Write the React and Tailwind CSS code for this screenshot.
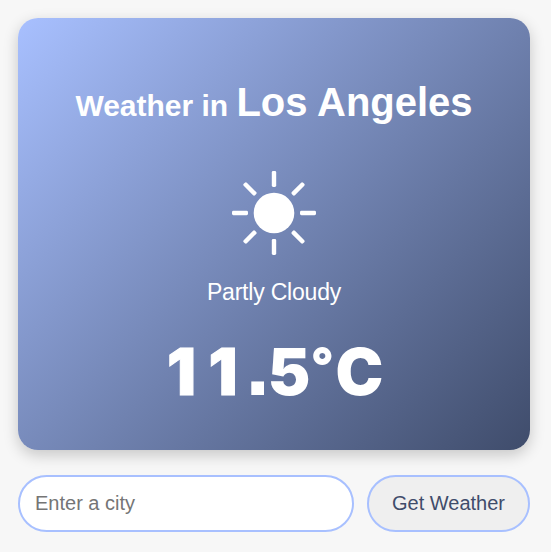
const rays = [0, 45, 90, 135, 180, 225, 270, 315];

function Sun() {
  return (
    <svg className="mt-[34px] block size-[100px]" viewBox="0 0 100 100" fill="white">
      <circle cx="50" cy="50" r="20.3" />
      {rays.map((angle) => (
        <rect key={angle} x="47.8" y="8" width="4.4" height="16" rx="1.4" transform={`rotate(${angle} 50 50)`} />
      ))}
    </svg>
  );
}

export default function App() {
  return (
    <div className="h-[552px] w-[551px] overflow-hidden bg-[#f7f7f7] pt-[18px] pl-[18px] font-['Liberation_Sans',Arial,sans-serif]">
      <section className="flex h-[432px] w-[512px] flex-col items-center rounded-[20px] bg-linear-[135deg,#a8c0ff,#3f4c6b] text-white shadow-[0_5px_15px_rgba(0,0,0,0.2)]">
        <h1 className="mt-[61px] text-[30px] leading-[46px] font-bold tracking-[-0.02px] whitespace-nowrap">
          Weather in <span className="text-[40px]">Los Angeles</span>
        </h1>
        <Sun />
        <p className="mt-[15px] text-[23px] leading-[28px] tracking-[-0.2px]">Partly Cloudy</p>
        <p className="mt-[28px] w-full pl-[149px] font-['Inter',sans-serif] text-[64px] leading-[76px] font-black whitespace-nowrap">
          <span className="tracking-[12.5px] [-webkit-text-stroke:1px_white]">1</span>
          <span className="tracking-[6.5px] [-webkit-text-stroke:1px_white]">1</span>
          <span className="font-['DejaVu_Sans',sans-serif] text-[72px] leading-[0] font-bold tracking-[-3.5px]">.</span>
          <span className="tracking-[0.5px]">5</span>
          <span className="align-[11px] text-[50px] leading-[0] tracking-[1.5px]">°</span>
          <span>C</span>
        </p>
      </section>
      <form className="mt-[25px] flex gap-[13px]" onSubmit={(e) => e.preventDefault()}>
        <input
          className="h-[57px] w-[336px] rounded-full border-2 border-[#a8c0ff] bg-white px-[15px] text-[20px] placeholder:text-[#757575]"
          placeholder="Enter a city"
        />
        <button className="h-[57px] w-[163px] rounded-full border-2 border-[#a8c0ff] bg-[#efefef] pb-[2px] text-[20px] text-[#3f4c6b]">
          Get Weather
        </button>
      </form>
    </div>
  );
}
